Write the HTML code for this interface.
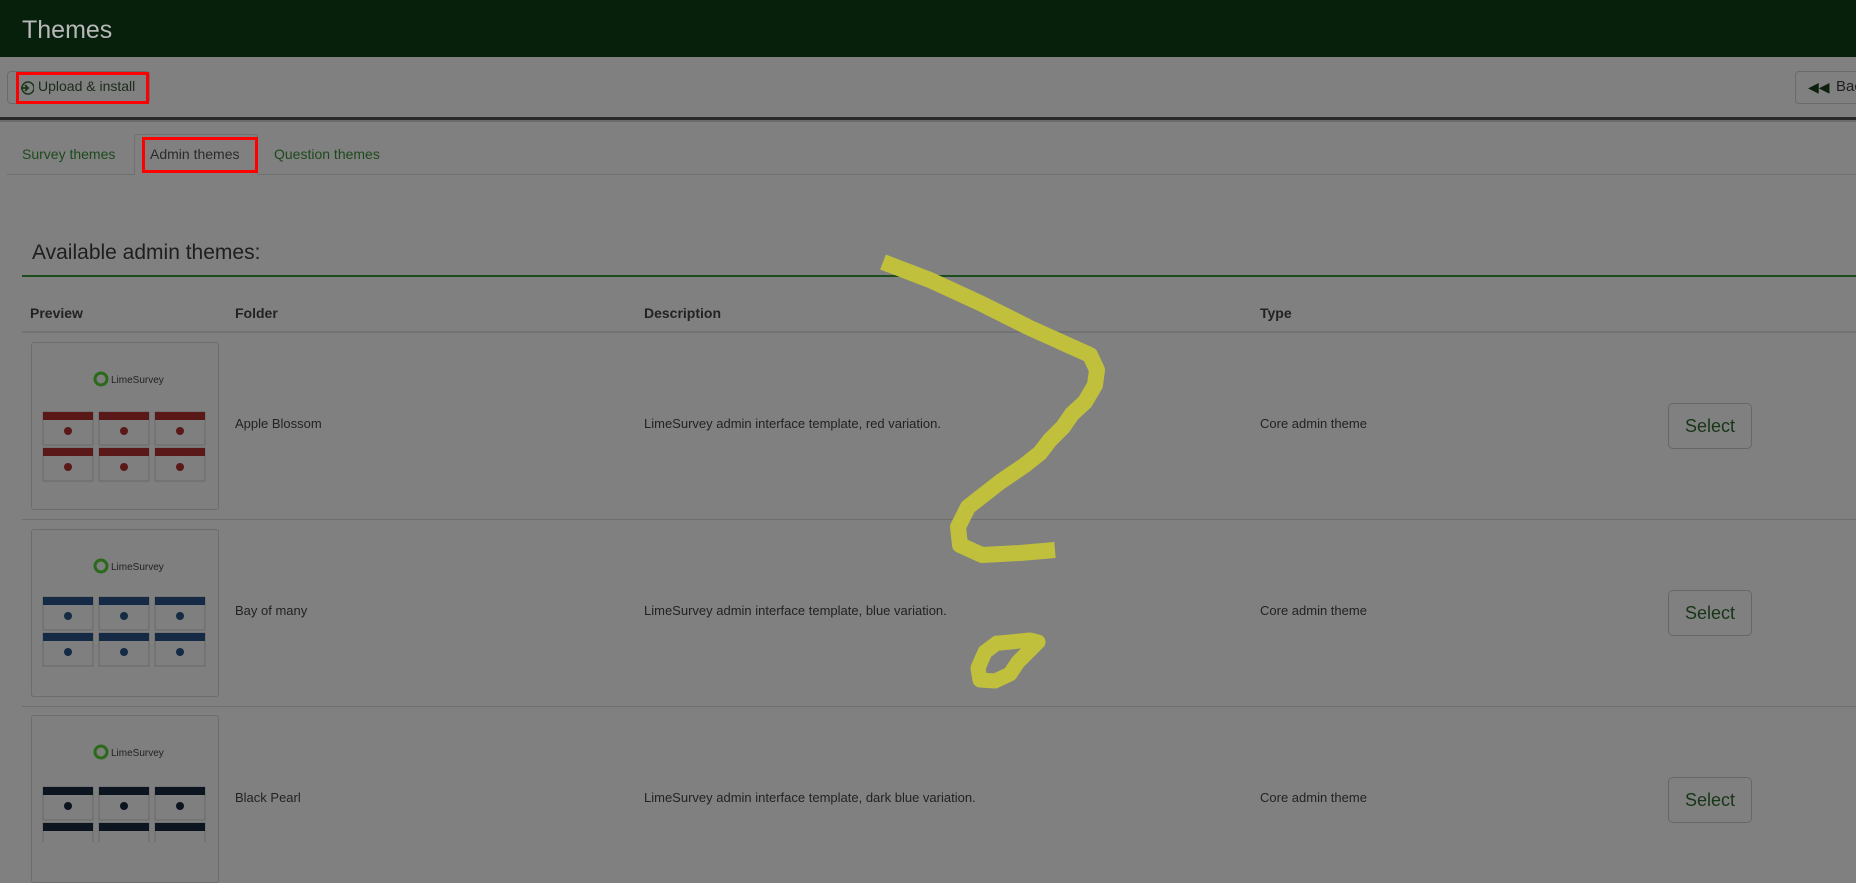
<!DOCTYPE html>
<html><head><meta charset="utf-8"><style>
*{margin:0;padding:0;box-sizing:border-box}
body{width:1856px;height:843px;overflow:hidden;background:#808080;font-family:"Liberation Sans",Arial,sans-serif;position:relative;color:#1e1e1e}
.abs{position:absolute}
.hdr{left:0;top:0;width:1856px;height:57px;background:#06200b}
.hdr span{position:absolute;left:22px;top:16px;font-size:25px;color:#b8b8b8}
.btn{border:1px solid #6a6a6a;border-radius:4px}
.red{border:3px solid #f00}
.txt{font-size:13px;color:#222;white-space:nowrap}
.hline{height:1px;background:#6e6e6e}
.th{font-size:14px;font-weight:bold;color:#222}
.thumb{left:31px;width:188px;height:168px;border:1px solid #6c6c6c;border-radius:3px;background:#7f7f7f;overflow:hidden}
.sel{left:1668px;width:84px;height:46px;border:1px solid #666;border-radius:5px;font-size:18px;color:#173517;text-align:center;line-height:44px}
</style></head><body>
<div class="abs hdr"><span>Themes</span></div>
<div class="abs btn" style="left:7px;top:71px;width:143px;height:33px"></div>
<div class="abs red" style="left:16px;top:72px;width:133px;height:32px"></div>
<svg class="abs" style="left:20px;top:80px" width="14" height="16" viewBox="0 0 14 16"><circle cx="8" cy="8" r="6" fill="none" stroke="#173517" stroke-width="1.4"/><path d="M1 8h7M5 5l3 3-3 3" fill="none" stroke="#173517" stroke-width="1.8"/></svg>
<div class="abs" style="left:38px;top:78px;font-size:14px;color:#1b2b1b">Upload &amp; install</div>
<div class="abs btn" style="left:1795px;top:71px;width:80px;height:33px"></div>
<div class="abs" style="left:1808px;top:79px;font-size:14px;color:#0d200d">&#9664;&#9664;</div>
<div class="abs" style="left:1836px;top:78px;font-size:15px;color:#1e1e1e">Back</div>
<div class="abs" style="left:0;top:117px;width:1856px;height:3px;background:#2a2a2a"></div>
<div class="abs" style="left:0;top:120px;width:1856px;height:2px;background:#6a6a6a"></div>
<div class="abs hline" style="left:7px;top:174px;width:1849px;background:#707070"></div>
<div class="abs" style="left:134px;top:134px;width:124px;height:41px;border:1px solid #707070;border-bottom:1px solid #808080;border-radius:4px 4px 0 0;background:#808080"></div>
<div class="abs red" style="left:142px;top:137px;width:116px;height:36px"></div>
<div class="abs" style="left:22px;top:146px;font-size:14px;color:#1d4a1d">Survey themes</div>
<div class="abs" style="left:150px;top:146px;font-size:14px;color:#2a2a2a">Admin themes</div>
<div class="abs" style="left:274px;top:146px;font-size:14px;color:#1d4a1d">Question themes</div>
<div class="abs" style="left:32px;top:241px;font-size:21px;color:#1e1e1e">Available admin themes:</div>
<div class="abs" style="left:22px;top:275px;width:1834px;height:2px;background:#1d4d1d"></div>
<div class="abs th" style="left:30px;top:305px">Preview</div>
<div class="abs th" style="left:235px;top:305px">Folder</div>
<div class="abs th" style="left:644px;top:305px">Description</div>
<div class="abs th" style="left:1260px;top:305px">Type</div>
<div class="abs" style="left:22px;top:331px;width:1834px;height:2px;background:#737373"></div>
<div class="abs hline" style="left:22px;top:519px;width:1834px"></div>
<div class="abs hline" style="left:22px;top:706px;width:1834px"></div>

<div class="abs thumb" style="top:342px"></div>
<div class="abs thumb" style="top:529px"></div>
<div class="abs thumb" style="top:715px"></div>

<div class="abs txt" style="left:235px;top:416px">Apple Blossom</div>
<div class="abs txt" style="left:644px;top:416px">LimeSurvey admin interface template, red variation.</div>
<div class="abs txt" style="left:1260px;top:416px">Core admin theme</div>
<div class="abs sel" style="top:403px">Select</div>

<div class="abs txt" style="left:235px;top:603px">Bay of many</div>
<div class="abs txt" style="left:644px;top:603px">LimeSurvey admin interface template, blue variation.</div>
<div class="abs txt" style="left:1260px;top:603px">Core admin theme</div>
<div class="abs sel" style="top:590px">Select</div>

<div class="abs txt" style="left:235px;top:790px">Black Pearl</div>
<div class="abs txt" style="left:644px;top:790px">LimeSurvey admin interface template, dark blue variation.</div>
<div class="abs txt" style="left:1260px;top:790px">Core admin theme</div>
<div class="abs sel" style="top:777px">Select</div>

<svg class="abs" style="left:31px;top:342px" width="188" height="500">
<g font-family="Liberation Sans,sans-serif">
<g>
<circle cx="70" cy="37" r="6" fill="none" stroke="#2a6a1a" stroke-width="3"/><text x="80" y="41" font-size="10" fill="#222">LimeSurvey</text>
<rect x="12" y="70" width="50" height="33" fill="none" stroke="#6a6a6a"/><rect x="12" y="70" width="50" height="8" fill="#5a1818"/>
<rect x="68" y="70" width="50" height="33" fill="none" stroke="#6a6a6a"/><rect x="68" y="70" width="50" height="8" fill="#5a1818"/>
<rect x="124" y="70" width="50" height="33" fill="none" stroke="#6a6a6a"/><rect x="124" y="70" width="50" height="8" fill="#5a1818"/>
<rect x="12" y="106" width="50" height="33" fill="none" stroke="#6a6a6a"/><rect x="12" y="106" width="50" height="8" fill="#5a1818"/>
<rect x="68" y="106" width="50" height="33" fill="none" stroke="#6a6a6a"/><rect x="68" y="106" width="50" height="8" fill="#5a1818"/>
<rect x="124" y="106" width="50" height="33" fill="none" stroke="#6a6a6a"/><rect x="124" y="106" width="50" height="8" fill="#5a1818"/>
<circle cx="37" cy="89" r="4" fill="#5a1818"/><circle cx="93" cy="89" r="4" fill="#5a1818"/><circle cx="149" cy="89" r="4" fill="#5a1818"/>
<circle cx="37" cy="125" r="4" fill="#5a1818"/><circle cx="93" cy="125" r="4" fill="#5a1818"/><circle cx="149" cy="125" r="4" fill="#5a1818"/>
</g>
<g transform="translate(0,187)">
<circle cx="70" cy="37" r="6" fill="none" stroke="#2a6a1a" stroke-width="3"/><text x="80" y="41" font-size="10" fill="#222">LimeSurvey</text>
<rect x="12" y="68" width="50" height="33" fill="none" stroke="#6a6a6a"/><rect x="12" y="68" width="50" height="8" fill="#152a45"/>
<rect x="68" y="68" width="50" height="33" fill="none" stroke="#6a6a6a"/><rect x="68" y="68" width="50" height="8" fill="#152a45"/>
<rect x="124" y="68" width="50" height="33" fill="none" stroke="#6a6a6a"/><rect x="124" y="68" width="50" height="8" fill="#152a45"/>
<rect x="12" y="104" width="50" height="33" fill="none" stroke="#6a6a6a"/><rect x="12" y="104" width="50" height="8" fill="#152a45"/>
<rect x="68" y="104" width="50" height="33" fill="none" stroke="#6a6a6a"/><rect x="68" y="104" width="50" height="8" fill="#152a45"/>
<rect x="124" y="104" width="50" height="33" fill="none" stroke="#6a6a6a"/><rect x="124" y="104" width="50" height="8" fill="#152a45"/>
<circle cx="37" cy="87" r="4" fill="#152a45"/><circle cx="93" cy="87" r="4" fill="#152a45"/><circle cx="149" cy="87" r="4" fill="#152a45"/>
<circle cx="37" cy="123" r="4" fill="#152a45"/><circle cx="93" cy="123" r="4" fill="#152a45"/><circle cx="149" cy="123" r="4" fill="#152a45"/>
</g>
<g transform="translate(0,373)">
<circle cx="70" cy="37" r="6" fill="none" stroke="#2a6a1a" stroke-width="3"/><text x="80" y="41" font-size="10" fill="#222">LimeSurvey</text>
<rect x="12" y="72" width="50" height="33" fill="none" stroke="#6a6a6a"/><rect x="12" y="72" width="50" height="8" fill="#0c1420"/>
<rect x="68" y="72" width="50" height="33" fill="none" stroke="#6a6a6a"/><rect x="68" y="72" width="50" height="8" fill="#0c1420"/>
<rect x="124" y="72" width="50" height="33" fill="none" stroke="#6a6a6a"/><rect x="124" y="72" width="50" height="8" fill="#0c1420"/>
<rect x="12" y="108" width="50" height="33" fill="none" stroke="#6a6a6a"/><rect x="12" y="108" width="50" height="8" fill="#0c1420"/>
<rect x="68" y="108" width="50" height="33" fill="none" stroke="#6a6a6a"/><rect x="68" y="108" width="50" height="8" fill="#0c1420"/>
<rect x="124" y="108" width="50" height="33" fill="none" stroke="#6a6a6a"/><rect x="124" y="108" width="50" height="8" fill="#0c1420"/>
<circle cx="37" cy="91" r="4" fill="#0c1420"/><circle cx="93" cy="91" r="4" fill="#0c1420"/><circle cx="149" cy="91" r="4" fill="#0c1420"/>
</g>
</g></svg>

<svg class="abs" style="left:0;top:0" width="1856" height="843">
<path d="M883 262 L930 280 L980 303 L1030 328 L1090 355 L1097 370 L1095 385 L1085 402 L1072 414 L1063 427 L1050 440 L1040 453 L1025 465 L1000 482 L968 507 L958 527 L960 545 L982 555 L1020 553 L1055 550" fill="none" stroke="#c0c03c" stroke-width="16" stroke-linejoin="round" stroke-linecap="butt"/>
<path d="M1000 643 L1030 640 L1038 642 L1030 650 L1018 662 L1010 674 L995 681 L980 680 L978 668 L985 652 L997 643" fill="none" stroke="#c0c03c" stroke-width="15" stroke-linejoin="round" stroke-linecap="round"/>
</svg>
</body></html>
